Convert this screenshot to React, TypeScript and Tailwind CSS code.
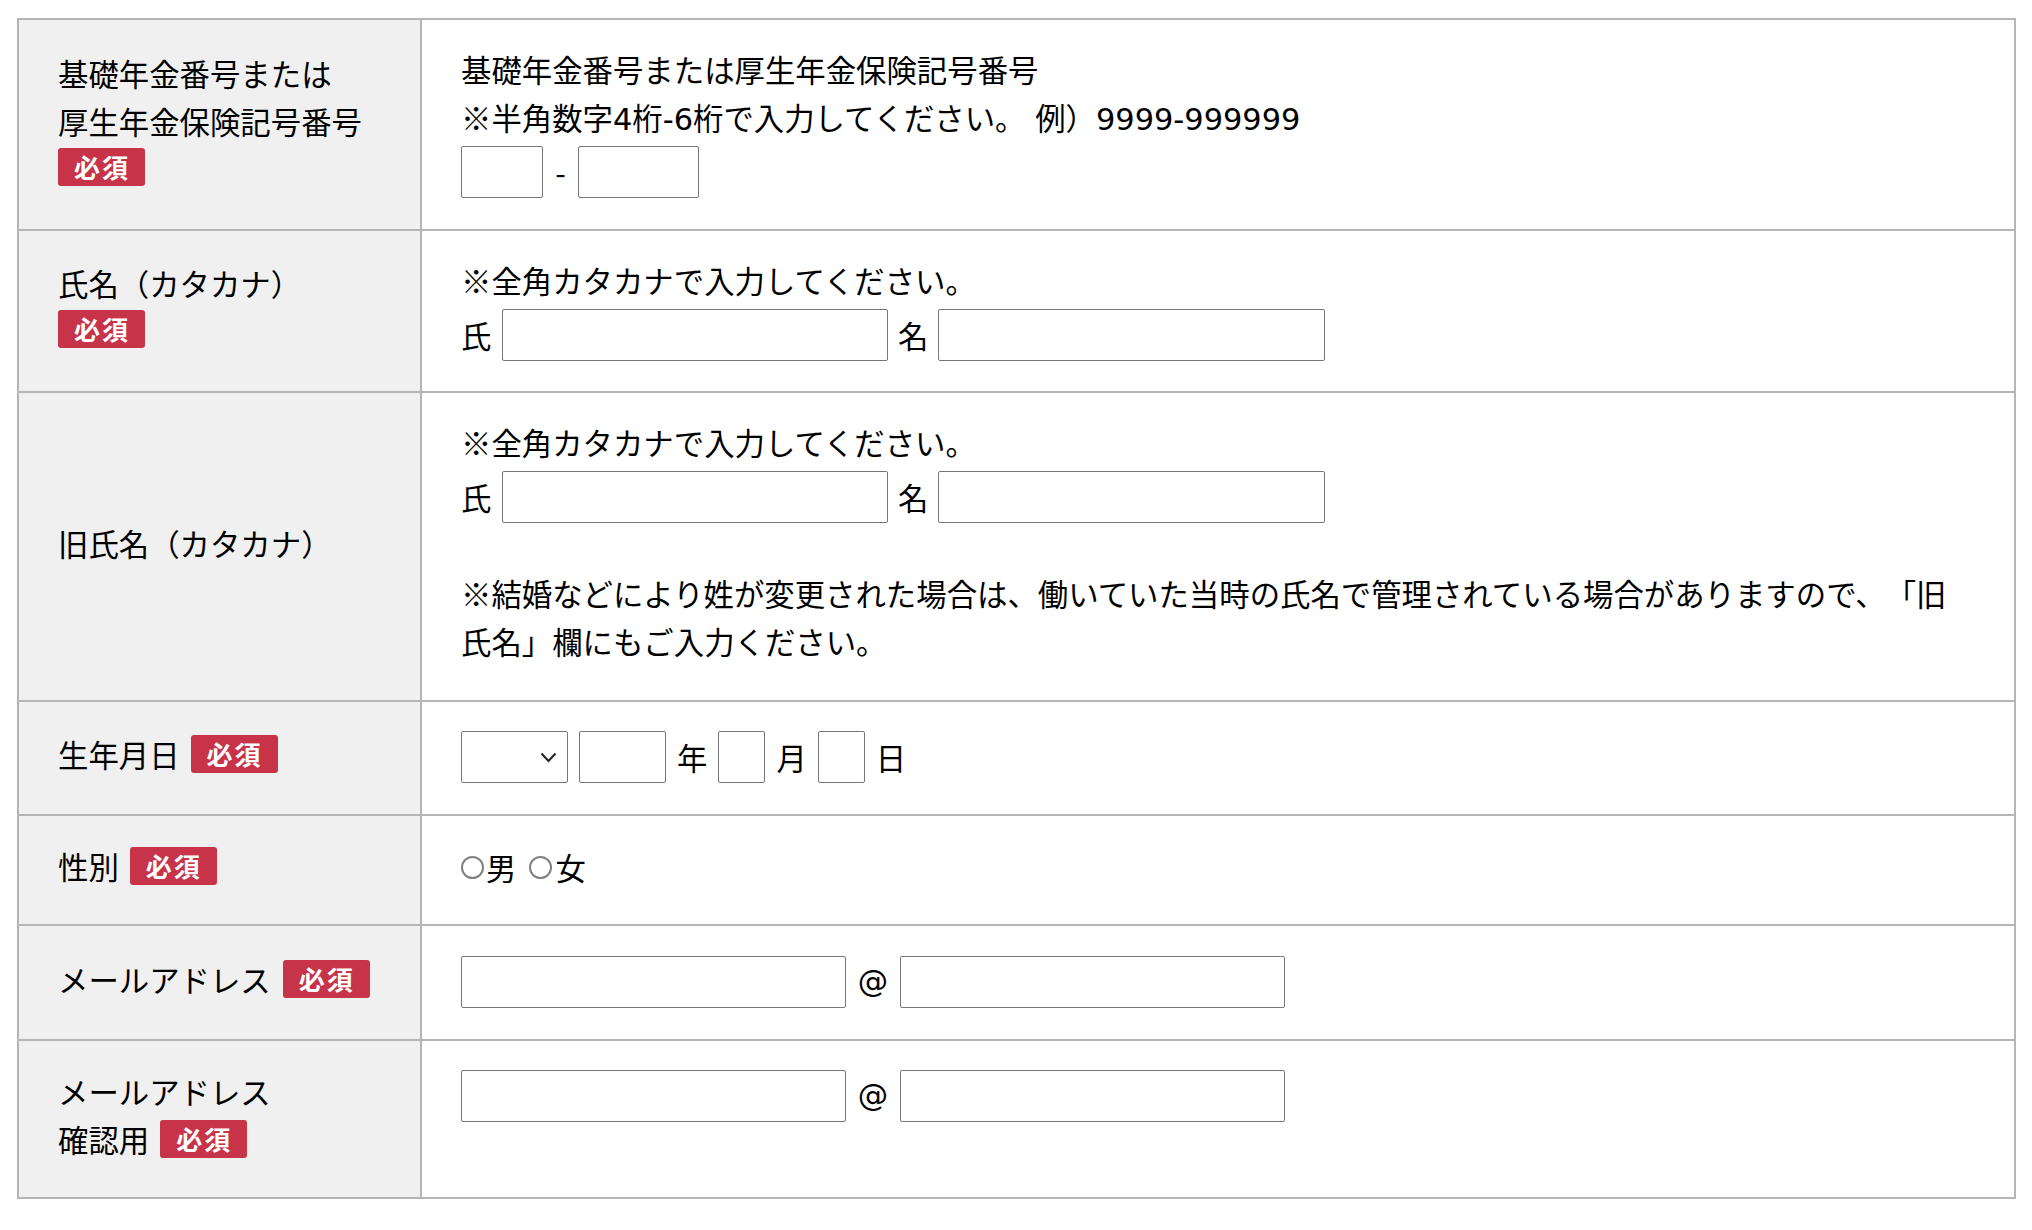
import type { ReactNode } from "react";

const LATIN = "font-['DejaVu_Sans','Noto_Sans_CJK_JP',sans-serif] leading-none";

function Badge({ className = "" }: { className?: string }) {
  return (
    <span
      className={`inline-block h-[38px] shrink-0 rounded-[3px] bg-[#c7344a] pl-[16px] pr-[15px] text-[26px] font-bold leading-[38px] tracking-[2px] text-white ${className}`}
    >
      必須
    </span>
  );
}

// label cell is centred, content cell is top aligned; padding differs per row
function Row({
  label,
  children,
  first = false,
  pad,
}: {
  label: ReactNode;
  children: ReactNode;
  first?: boolean;
  pad: string;
}) {
  return (
    <div className={`grid grid-cols-[403px_1fr] ${first ? "" : "border-t-2 border-[#b5b5b5]"}`}>
      <div className="flex items-center border-r-2 border-[#b5b5b5] bg-[#f0f0f0] pb-[34px] pl-[39px] pt-[26px]">
        <div className="w-full">{label}</div>
      </div>
      <div className={`pl-[39px] pr-[53px] ${pad}`}>{children}</div>
    </div>
  );
}

function Field({ className }: { className: string }) {
  return (
    <input
      type="text"
      className={`h-[52px] shrink-0 rounded-[2px] border border-[#767676] bg-white ${className}`}
    />
  );
}

function Radio({ className = "" }: { className?: string }) {
  return (
    <span
      className={`inline-block h-[23px] w-[23px] shrink-0 rounded-full border-2 border-[#808080] bg-white ${className}`}
    />
  );
}

function NameInputs() {
  return (
    <div className="mt-[5px] flex items-center gap-[10px]">
      <span className="w-[31px]">氏</span>
      <Field className="w-[386px]" />
      <span>名</span>
      <Field className="w-[387px]" />
    </div>
  );
}

function EmailInputs() {
  return (
    <div className="flex items-center gap-[11px]">
      <Field className="w-[385px]" />
      <span className={`w-[32px] text-center ${LATIN}`}>@</span>
      <Field className="w-[385px]" />
    </div>
  );
}

function BadgeLine() {
  return (
    <div className="flex h-[48px] items-start pt-[3px]">
      <Badge />
    </div>
  );
}

export default function App() {
  return (
    <div className="min-h-screen bg-white pl-[17px] pt-[18px] font-['Noto_Sans_CJK_JP',sans-serif] text-[30.4px] leading-[48px] text-black [text-spacing-trim:space-all]">
      <div className="w-[1999px] border-2 border-[#b5b5b5]">
        <Row
          first
          pad="pt-[25px] pb-[31px]"
          label={
            <>
              <div>基礎年金番号または</div>
              <div>厚生年金保険記号番号</div>
              <BadgeLine />
            </>
          }
        >
          <div>基礎年金番号または厚生年金保険記号番号</div>
          <div className="h-[48px]">
            ※半角数字<span className={LATIN}>4</span>桁<span className={LATIN}>-6</span>桁で入力してください。
            <span className={LATIN}> </span>例）<span className={LATIN}>9999-999999</span>
          </div>
          <div className="mt-[5px] flex items-center gap-[11px]">
            <Field className="w-[82px]" />
            <span className="w-[13px] text-center">-</span>
            <Field className="w-[121px]" />
          </div>
        </Row>

        <Row
          pad="pt-[25px] pb-[30px]"
          label={
            <>
              <div>氏名（カタカナ）</div>
              <BadgeLine />
            </>
          }
        >
          <div>※全角カタカナで入力してください。</div>
          <NameInputs />
        </Row>

        <Row pad="pt-[25px] pb-[35px]" label={<div>旧氏名（カタカナ）</div>}>
          <div>※全角カタカナで入力してください。</div>
          <NameInputs />
          <div className="h-[46px]" />
          <p>
            ※結婚などにより姓が変更された場合は、働いていた当時の氏名で管理されている場合がありますので、「旧氏名」欄にもご入力ください。
          </p>
        </Row>

        <Row
          pad="pt-[29px] pb-[31px]"
          label={
            <div className="flex items-center">
              <span>生年月日</span>
              <Badge className="ml-[11px]" />
            </div>
          }
        >
          <div className="flex items-center gap-[11px]">
            <div className="flex h-[52px] w-[107px] shrink-0 items-center justify-end rounded-[2px] border border-[#767676] bg-white pr-[10px]">
              <svg width="17" height="11" viewBox="0 0 17 11" fill="none">
                <polyline points="1.5,1.5 8.5,9 15.5,1.5" stroke="#222" strokeWidth="2" />
              </svg>
            </div>
            <Field className="w-[87px]" />
            <span>年</span>
            <Field className="w-[47px]" />
            <span>月</span>
            <Field className="w-[47px]" />
            <span>日</span>
          </div>
        </Row>

        <Row
          pad="pt-[27px] pb-[33px]"
          label={
            <div className="flex items-center">
              <span>性別</span>
              <Badge className="ml-[11px]" />
            </div>
          }
        >
          <div className="flex h-[48px] items-center">
            <Radio />
            <span className="ml-[2px]">男</span>
            <Radio className="ml-[13px]" />
            <span className="ml-[3px]">女</span>
          </div>
        </Row>

        <Row
          pad="pt-[30px] pb-[31px]"
          label={
            <div className="flex items-center">
              <span>メールアドレス</span>
              <Badge className="ml-[12px]" />
            </div>
          }
        >
          <EmailInputs />
        </Row>

        <Row
          pad="pt-[29px] pb-[31px]"
          label={
            <>
              <div>メールアドレス</div>
              <div className="flex items-center">
                <span>確認用</span>
                <Badge className="ml-[11px]" />
              </div>
            </>
          }
        >
          <EmailInputs />
        </Row>
      </div>
    </div>
  );
}
